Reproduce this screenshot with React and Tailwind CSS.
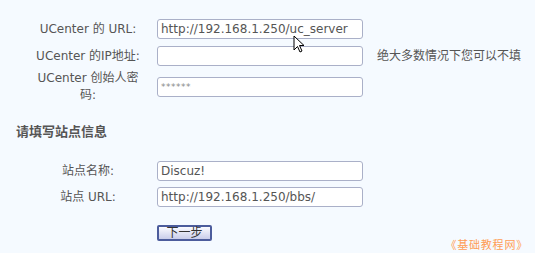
import React from "react";

const font = { fontFamily: '"DejaVu Sans", "Noto Sans CJK SC", sans-serif' };

function Field({ value, muted }) {
  return (
    <div className="w-[206px] h-[20px] shrink-0 rounded-[3px] border border-[#aab0c8] bg-white pl-[3px] flex items-center text-[12px] text-[#555] leading-none overflow-hidden whitespace-nowrap">
      {muted ? <span className="text-[9px] text-[#8a8a8a] tracking-[0.5px]">******</span> : value}
    </div>
  );
}

function Row({ label, value, h, note, muted }) {
  return (
    <div className={`flex items-center ${h}`}>
      <div className="w-[110px] ml-[33px] text-center text-[12px] leading-[17px] text-[#555]">{label}</div>
      <div className="ml-[14px]">
        <Field value={value} muted={muted} />
      </div>
      {note && <div className="ml-[14px] text-[12px] text-[#555] whitespace-nowrap">{note}</div>}
    </div>
  );
}

export default function App() {
  return (
    <div className="relative w-[535px] h-[253px] bg-[#f5faff] overflow-hidden" style={font}>
      <div className="pt-[16px] flex flex-col gap-px">
        <Row label="UCenter 的 URL:" value="http://192.168.1.250/uc_server" h="h-[26px]" />
        <Row label="UCenter 的IP地址:" value="" h="h-[26px]" note="绝大多数情况下您可以不填" />
        <Row label="UCenter 创始人密码:" muted h="h-[34px]" />
      </div>
      <div className="mt-[20px] ml-[16px] h-[14px] flex items-center text-[13px] font-bold text-[#555] leading-none">请填写站点信息</div>
      <div className="mt-[20px] flex flex-col">
        <Row label="站点名称:" value="Discuz!" h="h-[26px]" />
        <Row label="站点 URL:" value="http://192.168.1.250/bbs/" h="h-[26px]" />
      </div>
      <div className="mt-[15px] ml-[157px]">
        <button className="w-[55px] h-[16px] border-2 border-[#4c5c9c] rounded-[2px] bg-gradient-to-b from-[#fbfbff] to-[#c9cdea] text-[12px] text-[#333] leading-none flex items-center justify-center">
          下一步
        </button>
      </div>
      <div className="absolute right-[7px] top-[239px] text-[11px] leading-[14px] tracking-[0.8px] text-[#ff9d55] whitespace-nowrap">《基础教程网》</div>
      <svg className="absolute left-[293px] top-[35px]" width="13" height="20" viewBox="0 0 13 20">
        <path d="M1 1 L1 15 L4.5 11.5 L7 17 L9 16 L6.5 10.5 L11 10.5 Z" fill="white" stroke="black" strokeWidth="1" strokeLinejoin="round" />
      </svg>
    </div>
  );
}
